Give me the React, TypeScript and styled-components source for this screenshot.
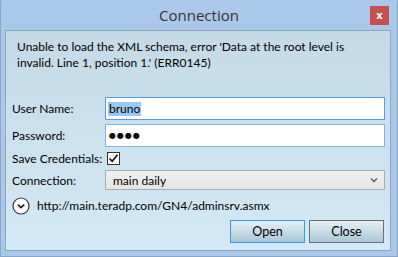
import React from "react";
import styled, { createGlobalStyle } from "styled-components";

const Global = createGlobalStyle`
  html, body {
    margin: 0;
    padding: 0;
    background: #aac8e7;
  }
  * {
    box-sizing: border-box;
  }
`;

const Window = styled.div`
  width: 398px;
  height: 257px;
  border: 1px solid #8ba7c7;
  border-top-color: #aac8e7;
  background: #aac8e7;
  padding: 29px 6px 5px 4px;
  position: relative;
  font-family: "Lato", "Open Sans", sans-serif;
  font-size: 12px;
  color: #000;
`;

const TitleBar = styled.div`
  position: absolute;
  top: 0;
  left: 0;
  right: 0;
  height: 28px;
  display: flex;
  align-items: center;
  justify-content: center;
  font-family: "Open Sans", "Noto Sans", sans-serif;
  font-size: 15px;
  color: #333;
`;

const CloseX = styled.div`
  position: absolute;
  top: 5px;
  right: 8px;
  width: 19px;
  height: 19px;
  background: #c75050;
  color: #fff;
  font-family: "DejaVu Sans", sans-serif;
  font-weight: bold;
  font-size: 10px;
  display: flex;
  align-items: center;
  justify-content: center;
`;

const Client = styled.div`
  height: 100%;
  border: 1px solid #8fa6bf;
  background: linear-gradient(#c4dae7, #d4e9f6);
  padding: 0 5px 0 6px;
  display: flex;
  flex-direction: column;
`;

const Message = styled.div`
  margin-top: 8px;
  padding-left: 5px;
  line-height: 16px;
`;

const Form = styled.div`
  margin-top: 26px;
  display: grid;
  grid-template-columns: 93px 280px;
  grid-template-rows: 23px 23px 15px 20px;
  row-gap: 4px;
  align-items: center;
`;

const Label = styled.div`
  white-space: nowrap;
`;

const Input = styled.div<{ $focused?: boolean }>`
  height: 23px;
  border: 1px solid ${(p) => (p.$focused ? "#569de5" : "#7eb4ea")};
  background: #fff;
  display: flex;
  align-items: center;
  padding-left: 2px;
`;

const Selected = styled.span`
  background: #99c9ef;
  padding: 0 1px;
  line-height: 14px;
`;

const Dots = styled.span`
  font-family: "DejaVu Sans", sans-serif;
  font-size: 8px;
  letter-spacing: 1px;
  padding-left: 1px;
`;

const CheckBox = styled.div`
  width: 13px;
  height: 13px;
  margin-left: 2px;
  border: 1px solid #333;
  background: #fff;
  display: flex;
  align-items: center;
  justify-content: center;
`;

const Combo = styled.div`
  height: 20px;
  border: 1px solid #acacac;
  background: linear-gradient(#f0f0f0, #e5e5e5);
  display: flex;
  align-items: center;
  justify-content: space-between;
  padding: 0 6px 0 7px;
`;

const UrlRow = styled.div`
  margin-top: 6px;
  display: flex;
  align-items: center;
  gap: 7px;
  height: 19px;
`;

const Buttons = styled.div`
  margin-top: 5px;
  padding-right: 1px;
  display: flex;
  justify-content: flex-end;
  gap: 4px;
`;

const Button = styled.div<{ $default?: boolean }>`
  width: 75px;
  height: 23px;
  border: 1px solid ${(p) => (p.$default ? "#3399ff" : "#707070")};
  background: linear-gradient(#e5f0f6, #a9c8d5);
  display: flex;
  align-items: center;
  justify-content: center;
  font-size: 12.5px;
`;

export default function App() {
  return (
    <>
      <Global />
      <Window>
        <TitleBar>Connection</TitleBar>
        <CloseX>x</CloseX>
        <Client>
          <Message>
            Unable to load the XML schema, error 'Data at the root level is
            <br />
            invalid. Line 1, position 1.' (ERR0145)
          </Message>
          <Form>
            <Label>User Name:</Label>
            <Input $focused>
              <Selected>bruno</Selected>
            </Input>
            <Label>Password:</Label>
            <Input>
              <Dots>●●●●</Dots>
            </Input>
            <Label>Save Credentials:</Label>
            <CheckBox>
              <svg width="11" height="11" viewBox="0 0 11 11">
                <path d="M1.5 5.5 L4.2 8.3 L9.5 1.8" fill="none" stroke="#111" strokeWidth="1.7" />
              </svg>
            </CheckBox>
            <Label>Connection:</Label>
            <Combo>
              <span>main daily</span>
              <svg width="8" height="6" viewBox="0 0 8 6">
                <path d="M1 1.5 L4 4.5 L7 1.5" fill="none" stroke="#555" strokeWidth="1.3" />
              </svg>
            </Combo>
          </Form>
          <UrlRow>
            <svg width="18" height="18" viewBox="0 0 18 18">
              <circle cx="9" cy="9" r="8" fill="#fff" stroke="#333" strokeWidth="1.2" />
              <path d="M5.8 7.6 L9 10.6 L12.2 7.6" fill="none" stroke="#222" strokeWidth="1.8" />
            </svg>
            <span>http://main.teradp.com/GN4/adminsrv.asmx</span>
          </UrlRow>
          <Buttons>
            <Button $default>Open</Button>
            <Button>Close</Button>
          </Buttons>
        </Client>
      </Window>
    </>
  );
}
